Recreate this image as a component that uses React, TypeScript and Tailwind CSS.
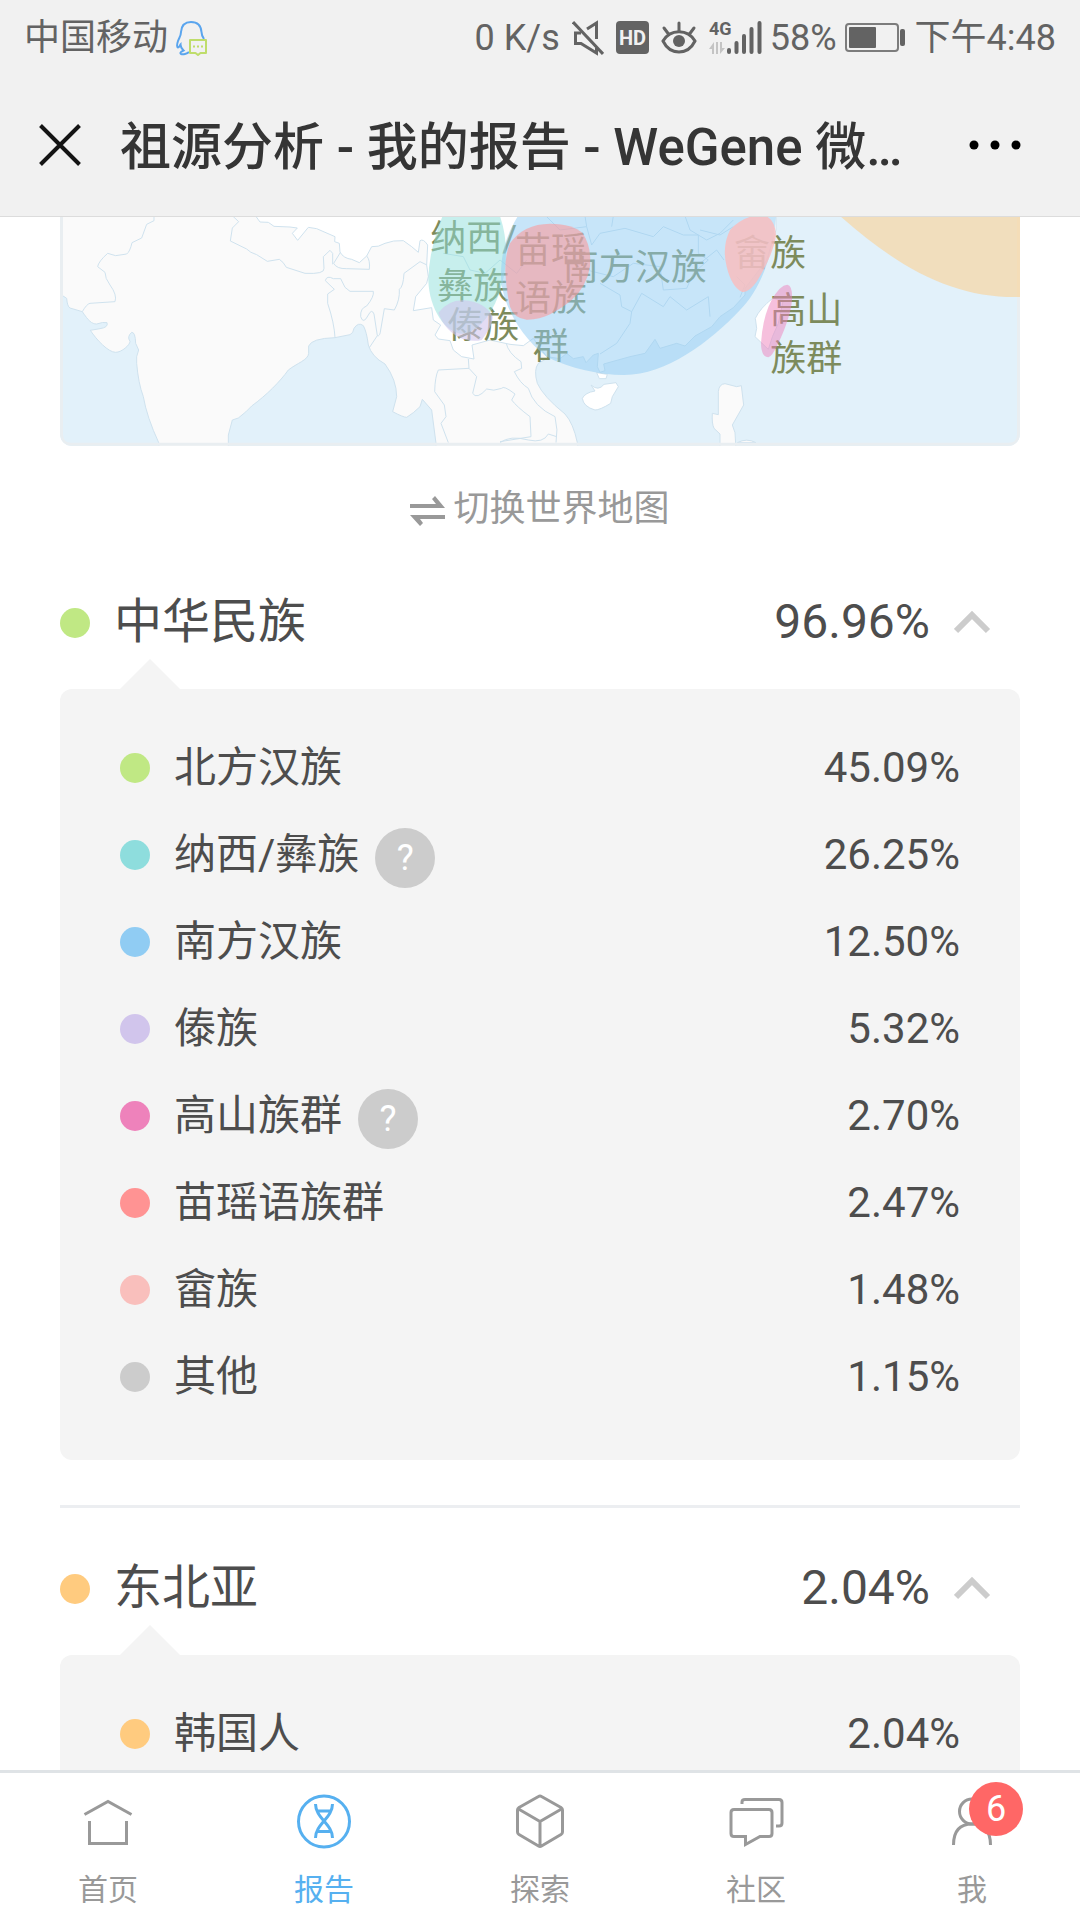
import React, { useState } from "react";

type Region = {
  name: string;
  value: string;
  dot: string;
  help?: boolean;
};

type RegionGroup = Region & {
  items: Array<Region>;
};

const groups: Array<RegionGroup> = [
  {
    name: "中华民族",
    value: "96.96%",
    dot: "bg-[#c0e884]",
    items: [
      { name: "北方汉族", value: "45.09%", dot: "bg-[#c0e884]" },
      { name: "纳西/彝族", value: "26.25%", dot: "bg-[#8edddd]", help: true },
      { name: "南方汉族", value: "12.50%", dot: "bg-[#90ccf3]" },
      { name: "傣族", value: "5.32%", dot: "bg-[#d1c5ec]" },
      { name: "高山族群", value: "2.70%", dot: "bg-[#ee82bb]", help: true },
      { name: "苗瑶语族群", value: "2.47%", dot: "bg-[#ff9393]" },
      { name: "畲族", value: "1.48%", dot: "bg-[#f9bfbc]" },
      { name: "其他", value: "1.15%", dot: "bg-[#cccccc]" },
    ],
  },
  {
    name: "东北亚",
    value: "2.04%",
    dot: "bg-[#ffcb7f]",
    items: [{ name: "韩国人", value: "2.04%", dot: "bg-[#ffcb7f]" }],
  },
];

const StatusBar = () => {
  return (
    <div className="flex h-[74px] items-center justify-between px-6 pt-0.5 text-4xl text-[#636363]">
      {/* Carrier */}
      <div className="flex items-center gap-2">
        <span>中国移动</span>
        <svg width="32" height="36" viewBox="0 0 32 36" fill="none">
          <path
            d="M28 19C26 16 25.5 15 25.5 12C25 5.5 21 2 15 2S5.5 5.5 5 12C5 16 3 18 2 21C1 24 1 27 2 27.5C3 27.5 4 25 4.5 24.5C4.5 27 6 29 7.5 30.5C5 31.5 3.5 33 5 34C7 34.5 11 34 13 32"
            stroke="#5aa5ee"
            strokeWidth="2"
          />
          <path
            d="M14 20H30V33H24.5L22 35L19.5 33H14Z"
            stroke="#bfdd6b"
            strokeWidth="2"
            strokeLinejoin="round"
          />
          <path d="M17 26.5h2M21 26.5h2M25 26.5h2" stroke="#bfdd6b" strokeWidth="2" />
        </svg>
      </div>
      {/* Indicators */}
      <div className="flex items-center gap-2">
        <div className="flex items-center gap-3">
          <span>0 K/s</span>
          <svg width="32" height="36" viewBox="0 0 32 36" fill="none" stroke="#636363">
            <path d="M1 2L31 34" strokeWidth="3" />
            <path d="M9 13H3.5V23.5H9L24.5 33V28M15 9L24.5 3V19" strokeWidth="3" />
          </svg>
          <svg width="33" height="36" viewBox="0 0 33 36">
            <rect y="1" width="33" height="33" rx="4" fill="#636363" />
            <text
              x="16.5"
              y="25"
              textAnchor="middle"
              fontSize="20"
              fontWeight="700"
              fill="#f1f1f1"
            >
              HD
            </text>
          </svg>
          <svg width="36" height="36" viewBox="0 0 36 36" fill="none" stroke="#636363">
            <path d="M2 21C9 8.5 27 8.5 34 21C27 35.5 9 35.5 2 21Z" strokeWidth="3" />
            <circle cx="18" cy="21" r="6" fill="#636363" stroke="none" />
            <path d="M18 3V11M3 8L7.5 14M33 8L28.5 14" strokeWidth="3" strokeLinecap="round" />
          </svg>
          <svg width="53" height="36" viewBox="0 0 53 36" fill="#636363">
            <text x="0" y="15" fontSize="18" fontWeight="700">
              4G
            </text>
            <path
              d="M0 29L5 22V34H3V29ZM7 22H9V34H7ZM11 22H13V28H16L11 34Z"
              fill="#c4c4c4"
            />
            <path
              d="M20 30V32M27.5 23V32M35 16V32M42.5 9V32M50.5 3V32"
              stroke="#636363"
              strokeWidth="4"
              strokeLinecap="round"
            />
          </svg>
        </div>
        <span>58%</span>
        <svg width="62" height="36" viewBox="0 0 62 36" fill="#636363">
          <rect
            x="1"
            y="4"
            width="52"
            height="27"
            rx="3"
            fill="none"
            stroke="#7c7c7c"
            strokeWidth="2"
          />
          <rect x="4" y="7" width="27" height="21" rx="1" />
          <rect x="55" y="9" width="5" height="17" rx="2" />
        </svg>
        <span>下午4:48</span>
      </div>
    </div>
  );
};

const TitleBar = () => {
  return (
    <div className="flex h-[143px] items-center border-b border-[#dcdcdc] pr-14 pl-[39px]">
      <button type="button" aria-label="关闭" className="shrink-0">
        <svg width="42" height="42" viewBox="0 0 42 42" stroke="#141414" strokeWidth="4">
          <path d="M1.5 1.5L40.5 40.5M40.5 1.5L1.5 40.5" />
        </svg>
      </button>
      <h1 className="ml-[39px] grow truncate pt-1.5 text-[51px] leading-[72px] font-medium text-[#353535]">
        祖源分析 - 我的报告 - WeGene 微…
      </h1>
      <button type="button" aria-label="更多" className="shrink-0">
        <svg width="56" height="42" viewBox="0 0 56 42">
          <circle cx="6" cy="21" r="4.5" />
          <circle cx="27" cy="21" r="4.5" />
          <circle cx="48" cy="21" r="4.5" />
        </svg>
      </button>
    </div>
  );
};

const AncestryMap = () => {
  return (
    <svg
      viewBox="0 0 2880 687"
      className="block w-full rounded-b-xl"
      role="img"
      aria-label="祖源地图"
    >
      <rect width="2880" height="687" fill="#e2f1fa" />
      {/* South Asia and Indochina */}
      <g transform="translate(-30 -21)" stroke="#cfe2ee" strokeWidth="3" strokeLinejoin="round">
        <path
          fill="#fafafa"
          d="M30 0V252L50 265Q52 290 60 294L97 305C115 332 125 342 140 342Q160 335 171 338Q176 352 150 356L121 361C140 390 175 427 197 427C215 427 240 405 240 394Q230 380 245 367Q256 366 257 400L266 420Q257 440 260 460Q265 520 280 560Q290 620 327 700V720H535V675L547 630L565 624Q590 605 605 588C650 555 690 515 715 480C740 460 775 450 776 430V408Q785 385 855 383L900 374Q910 370 912 355Q925 335 940 347Q950 365 955 405Q965 440 1005 462Q1040 510 1040 560L1028 605Q1060 622 1070 622Q1090 610 1110 590L1117 568L1145 600L1158 700V720H1585L1582 698Q1570 640 1545 612Q1480 560 1462 520Q1450 480 1465 460L1500 440L1600 300V0Z"
        />
        <path
          fill="none"
          d="M97 305Q110 282 120 280L195 275Q202 255 180 225Q165 205 165 187L143 170Q145 155 173 130L197 137L230 132Q240 125 246 98L275 84L290 43L312 32V10M548 18L566 35L547 54L541 93L590 117Q600 128 620 134L652 154L688 148Q700 155 709 172L765 190Q825 193 822 175L820 140L840 121L848 130V163M872 126L851 160Q860 177 890 176L958 178Q961 150 950 138M855 383Q853 340 833 280V252L853 238L826 212Q830 195 850 206H872L885 232L900 244H970Q973 260 950 288Q930 295 932 320Q940 345 955 315Q965 295 972 312L982 377L958 413M982 377Q990 380 992 360L1003 296L1033 300Q1050 270 1048 238Q1060 230 1062 190L1110 155L1133 166"
        />
      </g>
      <g transform="translate(1020 -21)" stroke="#cfe2ee" strokeWidth="3" strokeLinejoin="round">
        <path
          fill="none"
          d="M205 447L207 475L115 480Q105 500 104 545L133 585L138 620L123 640L145 698M207 475L230 500L218 550Q230 570 260 537Q280 545 305 535Q310 525 345 552L335 570Q350 590 390 620L393 680L300 695M318 398Q325 430 363 455L365 475L343 485Q360 520 385 535Q400 590 465 620Q475 660 468 698M300 698Q330 675 385 690Q430 700 445 672L470 680"
        />
        {/* China */}
        <path
          fill="#ffffff"
          d="M-433 0V18L-420 36L-395 37L-378 49L-330 51L-308 54L-323 70L-307 91L-275 52L-250 56L-195 80L-196 95L-182 100L-180 126Q-170 145 -145 148L-122 158L-100 138L-85 110Q-65 112 -45 100Q-20 90 10 92L35 110L55 127L60 92Q70 85 83 105L80 165L85 200L80 220L47 260L40 302L95 293L100 330L122 345L105 375L115 387L150 392L160 420L185 440L222 447L216 405L270 390L330 403L370 407L400 385L440 440L480 446L500 430L520 446L550 440L558 458L580 435L595 430L592 470L600 487L615 482L611 462L690 440L735 430L765 388L780 415L830 400L855 408L885 378L935 350L960 320L1000 293L1035 255V235L1100 150L1128 60V0Z"
        />
        <path
          fill="#ffffff"
          d="M573 525Q595 545 612 523L648 518L655 530L637 560L632 580Q600 600 585 600Q550 590 547 565Q555 548 585 543ZM590 488L622 493L618 506H598Z"
        />
        <path
          fill="none"
          d="M130 130L190 140L210 180L255 190L300 150L350 190L380 150M440 20L480 60L560 50L575 105L600 70L675 55L760 80L790 50L850 75H895V130L925 150L880 190L860 235L790 240L780 170L700 160L640 200L560 180M600 220L660 255L665 290L695 305L725 250L790 290L810 260L860 300L925 260L930 320M695 305L690 340L650 400L600 432M855 18L870 60L920 90L960 70L1000 30M560 50L555 18M640 18L635 50"
        />
      </g>
      <g transform="translate(1920 -21)" stroke="#cfe2ee" strokeWidth="3" strokeLinejoin="round">
        <path fill="none" d="M0 60L60 75L100 50M0 160L50 120L72 150M110 200L135 225L120 262" />
        {/* Taiwan and Luzon */}
        <path
          fill="#ffffff"
          d="M218 265Q180 295 166 325L170 355L165 380L205 418Q215 380 235 340L250 270Z"
        />
        <path
          fill="#fafafa"
          d="M60 720V672L42 655Q35 640 37 610L55 614V545Q57 522 75 521L110 530L124 527L131 585L97 645L105 668L108 720ZM112 698Q140 683 168 698Z"
        />
      </g>
      <path
        d="M4.5 0V652Q4.5 682 34 682H2846Q2875.5 682 2875.5 652V0"
        fill="none"
        stroke="#e9eef1"
        strokeWidth="9"
      />
      {/* Labels */}
      <g fill="#7d8b5c" fontSize="108">
        <text x="1111" y="101">纳西/</text>
        <text x="1132" y="245">彝族</text>
        <text x="1162" y="363">傣族</text>
        <text x="1365" y="139">苗瑶</text>
        <text x="1365" y="283">语族</text>
        <text x="1418" y="427">群</text>
        <text x="1508" y="190">南方汉族</text>
        <text x="2022" y="147">畲族</text>
        <text x="2131" y="318">高山</text>
        <text x="2131" y="462">族群</text>
      </g>
      {/* Areas */}
      <g transform="translate(1020 -21)">
        <path
          fill="#8fdfdb"
          fillOpacity="0.5"
          d="M135 0Q85 120 85 210C87 300 140 373 190 371C250 365 318 260 318 130Q318 60 293 0Z"
        />
        <path
          fill="#90ccf3"
          fillOpacity="0.5"
          d="M365 0C320 70 303 120 303 200C305 270 350 370 440 440C510 475 600 495 672 495C800 495 930 395 1020 300C1080 240 1125 130 1128 0Z"
        />
        <path
          fill="#d1c5ec"
          fillOpacity="0.6"
          d="M115 308Q145 270 190 271Q255 275 278 320Q280 345 245 390Q220 396 190 388Q135 365 115 308Z"
        />
        <path
          fill="#ff9393"
          fillOpacity="0.55"
          d="M330 100Q370 42 450 41Q520 42 548 70Q575 110 570 170Q560 230 515 270C470 305 430 330 380 329Q342 325 330 290Q318 240 316 180Q316 130 330 100Z"
        />
      </g>
      <g transform="translate(1920 -21)">
        <path
          fill="#fbbcbb"
          fillOpacity="0.8"
          d="M90 60Q130 15 190 15Q225 25 228 75Q220 135 170 215Q145 250 125 245Q95 230 80 170Q65 110 90 60Z"
        />
        <path
          fill="#ee82bb"
          fillOpacity="0.5"
          d="M262 224Q278 226 276 270Q272 320 235 400Q215 442 205 442Q183 440 183 400Q188 320 215 270Q240 225 262 224Z"
        />
        <path fill="#ffcc80" fillOpacity="0.5" d="M400 0C600 180 760 265 960 261V0Z" />
      </g>
    </svg>
  );
};

const HelpButton = () => {
  return (
    <button
      type="button"
      aria-label="说明"
      className="mt-1.5 ml-4 size-[60px] rounded-full bg-[#cccccc] text-4xl text-white"
    >
      ?
    </button>
  );
};

const RegionSection = ({ group }: { group: RegionGroup }) => {
  const [open, setOpen] = useState(true);

  return (
    <section>
      <h2>
        <button
          type="button"
          aria-expanded={open}
          onClick={() => setOpen(!open)}
          className="flex h-[147px] w-full items-center pt-3 pr-7 text-5xl"
        >
          <span className={`mt-0.5 size-[30px] rounded-full ${group.dot}`} />
          <span className="ml-6">{group.name}</span>
          <span className="ml-auto">{group.value}</span>
          <svg
            width="38"
            height="24"
            viewBox="0 0 38 24"
            fill="none"
            stroke="#cccccc"
            strokeWidth="6"
            className={open ? "ml-6" : "ml-6 rotate-180"}
          >
            <path d="M2 21L18 5L34 21" />
          </svg>
        </button>
      </h2>
      {open && (
        <div className="relative rounded-xl bg-[#f4f4f4] px-[60px] pt-[35px] pb-10">
          {/* Pointer */}
          <svg
            width="60"
            height="30"
            viewBox="0 0 60 30"
            className="absolute bottom-full left-[60px]"
          >
            <path d="M0 30L30 0L60 30Z" fill="#f4f4f4" />
          </svg>
          <ul>
            {group.items.map((item) => (
              <li key={item.name} className="flex h-[87px] items-center text-[42px]">
                <span className={`size-[30px] rounded-full ${item.dot}`} />
                <span className="ml-6">{item.name}</span>
                {item.help && <HelpButton />}
                <span className="ml-auto">{item.value}</span>
              </li>
            ))}
          </ul>
        </div>
      )}
    </section>
  );
};

type NavItemProps = {
  label: string;
  active?: boolean;
  badge?: number;
  children: React.ReactNode;
};

const NavItem = ({ label, active, badge, children }: NavItemProps) => {
  return (
    <a
      href="#"
      aria-current={active ? "page" : undefined}
      className={`flex flex-1 flex-col items-center gap-4 pt-[18px] pb-2 ${
        active ? "text-[#56b0f0]" : "text-[#999999]"
      }`}
    >
      <span className="relative">
        <svg
          width="60"
          height="60"
          viewBox="0 0 60 60"
          fill="none"
          stroke="currentColor"
          strokeWidth="3"
        >
          {children}
        </svg>
        {badge && (
          <span className="absolute -top-[9px] left-[27px] flex size-[54px] items-center justify-center rounded-full bg-[#ff6766] text-4xl text-white">
            {badge}
          </span>
        )}
      </span>
      <span className="text-[30px] leading-[45px]">{label}</span>
    </a>
  );
};

const BottomNav = () => {
  return (
    <nav className="flex shrink-0 border-t-3 border-[#dfe3e6] bg-white">
      <NavItem label="首页">
        <path d="M6.5 23.5L30 10.5L53.5 23.5M11.5 30V52.5H48.5V30" />
      </NavItem>
      <NavItem label="报告" active>
        <circle cx="30" cy="30.5" r="25.5" />
        <path d="M21.5 13C21.5 27 38.5 33 38.5 47M38.5 13C38.5 27 21.5 33 21.5 47M23 20H37M23 40.5H37" />
      </NavItem>
      <NavItem label="探索">
        <path
          strokeLinejoin="round"
          d="M31.5 5.5L51 16.5Q52.5 17.5 52.5 19V41Q52.5 42.5 51 43.5L31.5 55Q30 56 28.5 55L9 43.5Q7.5 42.5 7.5 41V19Q7.5 17.5 9 16.5L28.5 5.5Q30 4.5 31.5 5.5ZM8.5 18L30 30.5L51.5 18M30 30.5V55"
        />
      </NavItem>
      <NavItem label="社区">
        <path d="M8 18.5H43Q46 18.5 46 21.5V42.5Q46 45.5 43 45.5H34L19.5 53.5V45.5H8Q5 45.5 5 42.5V21.5Q5 18.5 8 18.5ZM16 13V11Q16 8.5 19 8.5H53Q56 8.5 56 11.5V32Q56 35 53 35H50" />
      </NavItem>
      <NavItem label="我" badge={6}>
        <circle cx="30" cy="20.5" r="12.5" />
        <path d="M11.5 54C11.5 40 18 33 30 33S48.5 40 48.5 54" />
      </NavItem>
    </nav>
  );
};

const App = () => {
  return (
    <div className="flex h-screen flex-col bg-white font-['Roboto','Noto_Sans_CJK_SC',sans-serif] text-[#4d4d4d]">
      <header className="shrink-0 bg-[#f1f1f1]">
        <StatusBar />
        <TitleBar />
      </header>
      <main className="min-h-0 grow overflow-y-auto px-[60px] [scrollbar-width:none]">
        <AncestryMap />
        {/* Map switch */}
        <div className="flex justify-center pt-[39px] pb-[9px]">
          <button
            type="button"
            className="flex h-12 items-center gap-2 text-4xl text-[#999999]"
          >
            <svg width="35" height="30" viewBox="0 0 35 30" fill="#999999" className="mt-1">
              <path d="M0 8H26L22 3L25 0L35 12H0ZM35 23H10L13 27L10 30L0 19H35Z" />
            </svg>
            切换世界地图
          </button>
        </div>
        {groups.map((group, index) => (
          <React.Fragment key={group.name}>
            {index > 0 && <hr className="mt-[45px] border-t-3 border-[#eceef1]" />}
            <RegionSection group={group} />
          </React.Fragment>
        ))}
      </main>
      <BottomNav />
    </div>
  );
};

export default App;
